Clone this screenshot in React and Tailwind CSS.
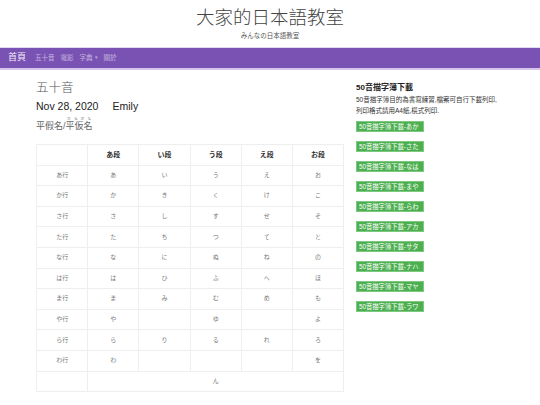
import React from 'react';

const rows = [
  ['あ行', 'あ', 'い', 'う', 'え', 'お'],
  ['か行', 'か', 'き', 'く', 'け', 'こ'],
  ['さ行', 'さ', 'し', 'す', 'せ', 'そ'],
  ['た行', 'た', 'ち', 'つ', 'て', 'と'],
  ['な行', 'な', 'に', 'ぬ', 'ね', 'の'],
  ['は行', 'は', 'ひ', 'ふ', 'へ', 'ほ'],
  ['ま行', 'ま', 'み', 'む', 'め', 'も'],
  ['や行', 'や', '', 'ゆ', '', 'よ'],
  ['ら行', 'ら', 'り', 'る', 'れ', 'ろ'],
  ['わ行', 'わ', '', '', '', 'を'],
];

const downloads = ['あか', 'さた', 'なは', 'まや', 'らわ', 'アカ', 'サタ', 'ナハ', 'マヤ', 'ラワ'];

const font = { fontFamily: '"Liberation Sans", "Noto Sans CJK TC", sans-serif' };

export default function App() {
  return (
    <div className="w-[540px] min-h-[405px] bg-white text-[#555]" style={font}>
      {/* site header */}
      <header className="h-[47px] flex flex-col items-center pt-[6px]">
        <h1 className="text-[18.5px] leading-[24px] text-[#444] font-light">大家的日本語教室</h1>
        <p className="text-[6.5px] leading-[9px] mt-[1px] text-[#555]">みんなの日本語教室</p>
      </header>

      {/* nav bar */}
      <nav className="h-[23px] bg-[#7952b3] border-t border-[#e4d9f2] border-b-2 border-b-[#d6c6ee] flex items-center px-[8px]">
        <span className="text-[9px] text-white/90 mr-[9px]">首頁</span>
        <div className="flex items-center gap-[6px] text-[6.5px] text-white/55">
          <span>五十音</span>
          <span>電影</span>
          <span className="flex items-center gap-[2px]">
            字典
            <span className="text-[5px]">▾</span>
          </span>
          <span>關於</span>
        </div>
      </nav>

      <main className="flex pl-[36px] pt-[10px]">
        {/* article */}
        <section className="w-[308px]">
          <h2 className="text-[12.5px] leading-[16px] text-[#555] font-light">五十音</h2>
          <div className="flex items-center gap-[14px] text-[10.5px] leading-[14px] text-[#222] mt-[3px]">
            <span>Nov 28, 2020</span>
            <span>Emily</span>
          </div>
          <p className="text-[9px] leading-[12px] text-[#666] mt-[4px]">
            平假名/
            <ruby>
              平仮名
              <rt className="text-[3.5px] leading-[4px]">ひらがな</rt>
            </ruby>
          </p>

          <table className="mt-[12px] w-[308px] border-collapse table-fixed text-[6px] text-center">
            <thead>
              <tr className="h-[20.6px]">
                <th className="border border-[#eee] w-[51.3px]"></th>
                {['あ段', 'い段', 'う段', 'え段', 'お段'].map((h) => (
                  <th key={h} className="border border-[#eee] font-bold text-[7px] text-[#333]">{h}</th>
                ))}
              </tr>
            </thead>
            <tbody>
              {rows.map((r) => (
                <tr key={r[0]} className="h-[20.6px]">
                  {r.map((c, i) => (
                    <td key={i} className="border border-[#eee] text-[#777]">{c}</td>
                  ))}
                </tr>
              ))}
              <tr className="h-[20.6px]">
                <td className="border border-[#eee]"></td>
                <td colSpan={5} className="border border-[#eee] text-[#777]">ん</td>
              </tr>
            </tbody>
          </table>
        </section>

        {/* sidebar */}
        <aside className="ml-[12px] w-[170px] pt-[2px]">
          <h3 className="text-[8px] leading-[11px] font-bold text-[#222]">50音描字簿下載</h3>
          <p className="text-[6.5px] leading-[11px] text-[#333] mt-[1px]">
            50音描字簿目的為書寫練習,檔案可自行下載列印,
            <br />
            列印格式請用A4紙,橫式列印.
          </p>
          <div className="flex flex-col items-start gap-[9px] mt-[5px]">
            {downloads.map((d) => (
              <a
                key={d}
                className="w-[68px] h-[11px] bg-[#4caf50] border border-[#7cc97f] text-white text-[6.3px] leading-[9px] px-[2px] whitespace-nowrap overflow-hidden"
              >
                50音描字簿下載-{d}
              </a>
            ))}
          </div>
        </aside>
      </main>
    </div>
  );
}
